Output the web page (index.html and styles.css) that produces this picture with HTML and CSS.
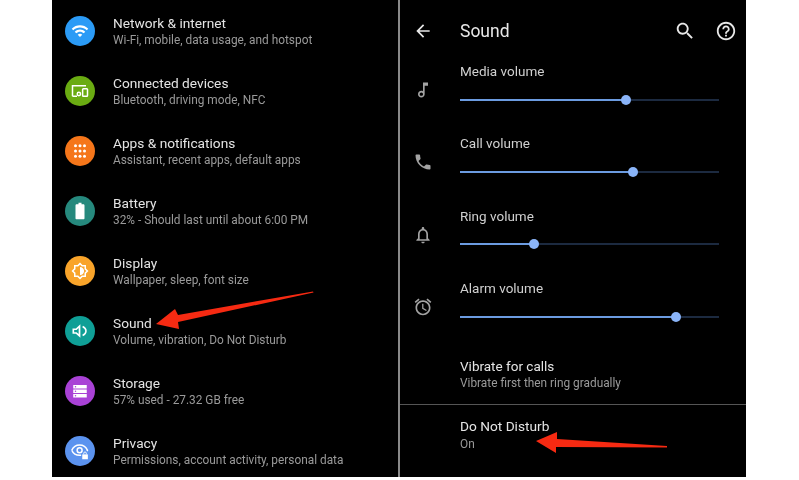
FILE: index.html
```html
<!DOCTYPE html>
<html lang="en">

<head>
    <meta charset="UTF-8">
    <meta name="viewport" content="width=device-width, initial-scale=1.0">
    <title>Sound settings</title>
    <link rel="stylesheet" href="styles.css">
</head>

<body>
    <div class="screens">

        <div class="settings">
            <div class="item">
                <div class="badge blue">
                    <svg viewBox="0 0 24 24"><path d="M1 9l2 2c4.97-4.97 13.03-4.97 18 0l2-2C16.93 2.93 7.08 2.93 1 9zm8 8l3 3 3-3c-1.65-1.66-4.34-1.66-6 0zm-4-4l2 2c2.76-2.76 7.24-2.76 10 0l2-2C15.14 9.14 8.87 9.14 5 13z"/></svg>
                </div>
                <div class="text">
                    <p class="title">Network &amp; internet</p>
                    <p class="sub">Wi-Fi, mobile, data usage, and hotspot</p>
                </div>
            </div>

            <div class="item">
                <div class="badge green">
                    <svg viewBox="0 0 24 24"><path d="M2 19V5h18M2 19h6" class="line"/><circle cx="10.500" cy="16" r="2.200" class="line"/><rect x="15.500" y="9" width="6.500" height="10" rx="1" class="line"/></svg>
                </div>
                <div class="text">
                    <p class="title">Connected devices</p>
                    <p class="sub">Bluetooth, driving mode, NFC</p>
                </div>
            </div>

            <div class="item">
                <div class="badge orange">
                    <svg viewBox="0 0 24 24"><circle cx="6" cy="5" r="2"/><circle cx="12" cy="5" r="2"/><circle cx="18" cy="5" r="2"/><circle cx="6" cy="12" r="2"/><circle cx="12" cy="12" r="2"/><circle cx="18" cy="12" r="2"/><circle cx="6" cy="19" r="2"/><circle cx="12" cy="19" r="2"/><circle cx="18" cy="19" r="2"/></svg>
                </div>
                <div class="text">
                    <p class="title">Apps &amp; notifications</p>
                    <p class="sub">Assistant, recent apps, default apps</p>
                </div>
            </div>

            <div class="item">
                <div class="badge teal">
                    <svg viewBox="0 0 24 24"><path d="M10 1h4v2h2.500c.8 0 1.500.7 1.500 1.500v17c0 .8-.7 1.500-1.500 1.500h-9c-.8 0-1.500-.7-1.500-1.500v-17C6 3.700 6.700 3 7.500 3H10z"/></svg>
                </div>
                <div class="text">
                    <p class="title">Battery</p>
                    <p class="sub">32% - Should last until about 6:00 PM</p>
                </div>
            </div>

            <div class="item">
                <div class="badge amber">
                    <svg viewBox="0 0 24 24"><path d="M20 8.690V4h-4.690L12 .690 8.690 4H4v4.690L.690 12 4 15.310V20h4.690L12 23.310 15.310 20H20v-4.690L23.310 12 20 8.690zm-2 5.790V18h-3.520L12 20.480 9.520 18H6v-3.520L3.520 12 6 9.520V6h3.520L12 3.520 14.480 6H18v3.520L20.480 12 18 14.480zM12 6.500v11c3.030 0 5.500-2.470 5.500-5.500S15.030 6.500 12 6.500z"/></svg>
                </div>
                <div class="text">
                    <p class="title">Display</p>
                    <p class="sub">Wallpaper, sleep, font size</p>
                </div>
            </div>

            <div class="item">
                <div class="badge sea">
                    <svg viewBox="0 0 24 24"><path d="M2 8.500v7h4.500l6 5.500V3L6.500 8.500H2zm8.200-.4v7.800L7.500 13.500H4.200v-3h3.300l2.700-2.400z"/><path d="M15.500 6c3 1.500 4.500 3.500 4.500 6s-1.500 4.500-4.500 6" class="line"/></svg>
                </div>
                <div class="text">
                    <p class="title">Sound</p>
                    <p class="sub">Volume, vibration, Do Not Disturb</p>
                </div>
            </div>

            <div class="item">
                <div class="badge purple">
                    <svg viewBox="0 0 24 24"><path d="M3 4h18v4.500H3zM3 10h18v4.500H3zM3 16h18v4.500H3z"/><circle cx="6" cy="6.200" r="1" class="hole"/><circle cx="6" cy="12.200" r="1" class="hole"/><circle cx="6" cy="18.200" r="1" class="hole"/></svg>
                </div>
                <div class="text">
                    <p class="title">Storage</p>
                    <p class="sub">57% used - 27.32 GB free</p>
                </div>
            </div>

            <div class="item">
                <div class="badge periwinkle">
                    <svg viewBox="0 0 24 24"><path d="M1 11C3 6.500 7 4 11.500 4S20 6.500 22 11c-.2.5-.4.8-.7 1.200M13.500 17.600c-.7.100-1.300.2-2 .2C7 17.800 3 15.500 1 11" class="line"/><circle cx="11.500" cy="11" r="3.300" class="line"/><path d="M15 16.500h7.500v6.500H15z"/><path d="M17 16.500v-1.500a1.700 1.700 0 0 1 3.400 0v1.500" class="thin"/></svg>
                </div>
                <div class="text">
                    <p class="title">Privacy</p>
                    <p class="sub">Permissions, account activity, personal data</p>
                </div>
            </div>
        </div>

        <div class="sound">
            <div class="topbar">
                <svg class="back" viewBox="0 0 24 24"><path d="M20 11H7.830l5.590-5.590L12 4l-8 8 8 8 1.410-1.410L7.830 13H20v-2z"/></svg>
                <h1>Sound</h1>
                <svg class="action" viewBox="0 0 24 24"><path d="M15.500 14h-.79l-.28-.27C15.410 12.590 16 11.110 16 9.500 16 5.910 13.090 3 9.500 3S3 5.910 3 9.500 5.910 16 9.500 16c1.610 0 3.090-.59 4.230-1.570l.27.28v.79l5 4.990L20.490 19l-4.990-5zm-6 0C7.010 14 5 11.990 5 9.500S7.010 5 9.500 5 14 7.010 14 9.500 11.990 14 9.500 14z"/></svg>
                <svg class="action" viewBox="0 0 24 24"><path d="M11 18h2v-2h-2v2zm1-16C6.480 2 2 6.480 2 12s4.480 10 10 10 10-4.480 10-10S17.520 2 12 2zm0 18c-4.410 0-8-3.590-8-8s3.590-8 8-8 8 3.590 8 8-3.590 8-8 8zm0-14c-2.210 0-4 1.790-4 4h2c0-1.100.9-2 2-2s2 .9 2 2c0 2-3 1.750-3 5h2c0-2.250 3-2.500 3-5 0-2.210-1.790-4-4-4z"/></svg>
            </div>

            <div class="volume">
                <svg viewBox="0 0 24 24"><path d="M12 3l.01 10.550c-.59-.34-1.270-.55-2.010-.55C7.790 13 6 14.790 6 17s1.790 4 4.010 4S14 19.210 14 17V7h4V3h-6zm-1.990 16c-1.100 0-2-.9-2-2s.9-2 2-2 2 .9 2 2-.9 2-2 2z"/></svg>
                <div>
                    <p class="title">Media volume</p>
                    <div class="track"><div class="fill" style="width: 64%"></div></div>
                </div>
            </div>

            <div class="volume">
                <svg viewBox="0 0 24 24"><path d="M6.620 10.790c1.440 2.830 3.760 5.140 6.590 6.590l2.200-2.200c.27-.27.67-.36 1.020-.24 1.120.37 2.330.57 3.570.57.55 0 1 .45 1 1V20c0 .55-.45 1-1 1-9.390 0-17-7.610-17-17 0-.55.45-1 1-1h3.500c.55 0 1 .45 1 1 0 1.250.2 2.450.57 3.570.11.35.03.74-.25 1.020l-2.200 2.200z"/></svg>
                <div>
                    <p class="title">Call volume</p>
                    <div class="track"><div class="fill" style="width: 66.8%"></div></div>
                </div>
            </div>

            <div class="volume">
                <svg viewBox="0 0 24 24"><path d="M12 22c1.100 0 2-.9 2-2h-4c0 1.100.89 2 2 2zm6-6v-5c0-3.070-1.640-5.640-4.500-6.320V4c0-.83-.67-1.500-1.500-1.500s-1.500.67-1.500 1.500v.68C7.630 5.360 6 7.920 6 11v5l-2 2v1h16v-1l-2-2zm-2 1H8v-6c0-2.480 1.510-4.500 4-4.500s4 2.020 4 4.500v6z"/></svg>
                <div>
                    <p class="title">Ring volume</p>
                    <div class="track"><div class="fill" style="width: 28.6%"></div></div>
                </div>
            </div>

            <div class="volume">
                <svg viewBox="0 0 24 24"><path d="M22 5.720l-4.600-3.860-1.290 1.530 4.600 3.860L22 5.720zM7.880 3.390L6.600 1.860 2 5.710l1.290 1.530 4.590-3.850zM12.500 8H11v6l4.750 2.850.75-1.230-4-2.370V8zM12 4c-4.970 0-9 4.030-9 9s4.020 9 9 9c4.970 0 9-4.030 9-9s-4.030-9-9-9zm0 16c-3.870 0-7-3.130-7-7s3.130-7 7-7 7 3.130 7 7-3.130 7-7 7z"/></svg>
                <div>
                    <p class="title">Alarm volume</p>
                    <div class="track"><div class="fill" style="width: 83.5%"></div></div>
                </div>
            </div>

            <div class="option vibrate">
                <p class="title">Vibrate for calls</p>
                <p class="sub">Vibrate first then ring gradually</p>
            </div>

            <div class="option dnd">
                <p class="title">Do Not Disturb</p>
                <p class="sub">On</p>
            </div>
        </div>

        <!-- red arrows drawn over the screenshots -->
        <svg class="arrows" viewBox="0 0 694 477">
            <polygon points="261.500,292.500 261,291.500 126,315 123,309 104,324 127,329 126,322" />
            <polygon points="615,447.500 615,446 505,439 505,432 484,441 504,453 504,447" />
        </svg>
    </div>
</body>

</html>
```

FILE: styles.css
```css
* {
    box-sizing: border-box;
}

body {
    margin: 0;
    background-color: white;
    font-family: Roboto, "Liberation Sans", sans-serif;
}

p {
    margin: 0;
}

.screens {
    position: relative;
    display: flex;
    width: 694px;
    height: 477px;
    margin-left: 52px;
    background-color: black;
    overflow: hidden;
    filter: blur(0.4px);
}

.settings {
    width: 346px;
    padding-top: 1px;
    flex-shrink: 0;
}

.item {
    display: flex;
    align-items: center;
    gap: 18px;
    height: 60px;
    padding-left: 13px;
}

.text {
    padding-top: 2px;
}

.badge {
    display: flex;
    justify-content: center;
    align-items: center;
    width: 30px;
    height: 30px;
    border-radius: 50%;
    flex-shrink: 0;
}

.badge svg {
    width: 18px;
    height: 18px;
    fill: white;
}

.line {
    fill: none;
    stroke: white;
    stroke-width: 2;
}

.thin {
    fill: none;
    stroke: white;
    stroke-width: 1.2;
}

.badge .hole {
    fill: #a942d6;
}

.blue { background-color: #2b9bf6; }
.green { background-color: #6aab12; }
.orange { background-color: #f5761a; }
.teal { background-color: #26897d; }
.amber { background-color: #f9a42a; }
.sea { background-color: #0f9f96; }
.purple { background-color: #a942d6; }
.periwinkle { background-color: #5b93ef; }

.title {
    font-size: 13.7px;
    line-height: 17px;
    color: #e4e4e4;
}

.sub {
    font-size: 11.85px;
    line-height: 17px;
    color: #9a9a9a;
}

.sound {
    flex: 1;
    border-left: 2px solid #8a8a8a;
}

.topbar {
    display: flex;
    align-items: center;
    height: 60px;
    padding: 2px 9px 0 13px;
}

.topbar svg {
    fill: #e8e8e8;
    flex-shrink: 0;
}

.back {
    width: 20px;
    height: 20px;
    margin-right: 27px;
}

.topbar h1 {
    flex: 1;
    margin: 0;
    font-size: 17.5px;
    font-weight: 400;
    color: #e8e8e8;
}

.action {
    width: 22px;
    height: 22px;
    margin-left: 19px;
}

.volume {
    display: grid;
    grid-template-columns: 20px 259px;
    column-gap: 27px;
    height: 72.4px;
    padding-left: 13px;
}

.volume svg {
    width: 20px;
    height: 20px;
    margin-top: 20px;
    fill: #a3a3a3;
}

.volume .title {
    margin-top: 3px;
    font-size: 13.5px;
    color: #d0d0d0;
}

.track {
    height: 2px;
    margin-top: 18.5px;
    background-color: #1c2a40;
}

.fill {
    position: relative;
    height: 2px;
    background-color: #6b9be0;
}

.fill::after {
    content: "";
    position: absolute;
    right: -5px;
    top: -4px;
    width: 10px;
    height: 10px;
    border-radius: 50%;
    background-color: #8ab4f8;
}

.option {
    padding-left: 60px;
}

.vibrate {
    height: 55px;
    padding-top: 8px;
    border-bottom: 1px solid #555;
}

.vibrate .title {
    font-size: 13.5px;
}

.dnd {
    padding-top: 13px;
}

.dnd .sub {
    margin-top: 1px;
}

.arrows {
    position: absolute;
    left: 0;
    top: 0;
    width: 694px;
    height: 477px;
    fill: #f62a12;
}
```
